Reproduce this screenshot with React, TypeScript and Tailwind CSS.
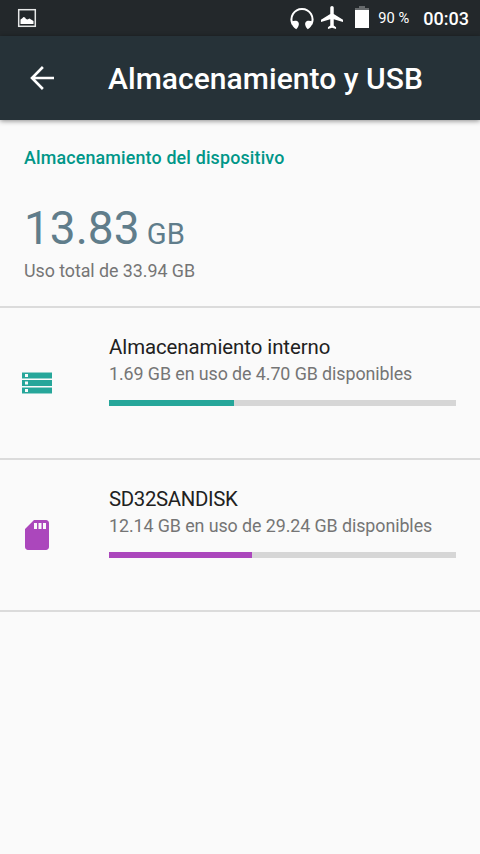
import React from "react";

interface Volume {
  name: string;
  nameClass: string;
  summary: string;
  percent: number;
  barClass: string;
  icon: React.ReactNode;
}

const StorageIcon = () => (
  <svg width="30" height="22" viewBox="0 0 30 22" shapeRendering="crispEdges">
    <path fill="#93d2cc" d="M0 0h30v7H0zM0 15h30v7H0z" />
    <path fill="#26a69a" d="M0 1h30v5H0zM0 8h30v6H0zM0 16h30v5H0z" />
    <path fill="#fafafa" d="M3 2h3v3H3zM3 10h3v2H3zM3 17h3v3H3z" />
    <path fill="#93d2cc" d="M3 9h3v1H3zM3 12h3v1H3z" />
  </svg>
);

const SdCardIcon = () => (
  <svg width="36" height="36" viewBox="0 0 24 24" fill="#ab47bc">
    <path d="M18 2h-8L4 8v12c0 1.1.9 2 2 2h12c1.1 0 2-.9 2-2V4c0-1.1-.9-2-2-2zm-6 6h-2V4h2v4zm3 0h-2V4h2v4zm3 0h-2V4h2v4z" />
  </svg>
);

const volumes: Volume[] = [
  {
    name: "Almacenamiento interno",
    nameClass: "tracking-[-0.06px]",
    summary: "1.69 GB en uso de 4.70 GB disponibles",
    percent: 36,
    barClass: "bg-[#26a69a]",
    icon: <StorageIcon />,
  },
  {
    name: "SD32SANDISK",
    nameClass: "tracking-[-0.33px]",
    summary: "12.14 GB en uso de 29.24 GB disponibles",
    percent: 41.2,
    barClass: "bg-[#ab47bc]",
    icon: <SdCardIcon />,
  },
];

const StatusBar = () => (
  <div className="flex h-9 items-center bg-[#23282b] pr-3 pl-[17px] text-white">
    <svg width="20" height="20" viewBox="0 0 20 20">
      <rect x="1.7" y="1.7" width="16.6" height="16.6" fill="none" stroke="#e6e8e8" strokeWidth="1.5" />
      <path fill="#fff" d="M3.5 16v-4.5L5 10.5l1.5-1.5 1.5.5 1 1.5 1.5.6 2-1 1.5 1 2.5 1.4v3z" />
    </svg>
    <div className="ml-auto flex items-center">
      {/* Headset */}
      <svg width="24" height="24" viewBox="0 0 24 24">
        <path
          fill="none"
          stroke="#fff"
          strokeWidth="2"
          d="M2.8 18.5A10.5 10.5 0 1 1 21.2 18.5"
        />
        <path
          fill="#fff"
          d="M1.3 15.5C3 14.8 5.5 14.3 7 15c1.7.8 2.1 2.3 1.8 3.8-.3 1.7-1.3 3.2-2.6 4.4C3.2 21.5 1.6 19 1.3 15.5zM22.7 15.5C21 14.800 18.500 14.300 17 15c-1.700.8-2.100 2.300-1.800 3.800.3 1.700 1.300 3.200 2.600 4.400 3-1.700 4.600-4.200 4.900-7.700z"
        />
      </svg>
      <svg
        className="-mt-[2px] ml-[7px]"
        width="22"
        height="23"
        viewBox="2 2 19 20"
        preserveAspectRatio="none"
        fill="#fff"
      >
        <path d="M21 16v-2l-8-5V3.5c0-.83-.67-1.5-1.5-1.5S10 2.67 10 3.5V9l-8 5v2l8-2.5V19l-2 1.5V22l3.5-1 3.5 1v-1.5L13 19v-5.5l8 2.5z" />
      </svg>
      <svg className="-mt-[2px] ml-3" width="14" height="22" viewBox="0 0 14 22">
        <path fill="#666a6c" d="M4 0h6v2h4v2H0V2h4z" />
        <path fill="#fff" d="M0 4h14v18H0z" />
      </svg>
      <span className="ml-[9px] w-[45px] text-[14.7px] leading-none">90 %</span>
      <span className="mt-0.5 -mr-px text-[18px] leading-none font-medium">00:03</span>
    </div>
  </div>
);

const Toolbar = () => (
  <div className="relative flex h-[84px] items-center bg-[#263238] pl-[30px] text-white shadow-[0_1px_5px_rgba(0,0,0,0.45)]">
    <svg width="24" height="24" viewBox="0 0 24 24" fill="none" stroke="#fff" strokeWidth="2.6">
      <path d="M12.9 1 2 12l10.9 11M1.5 12H24" />
    </svg>
    <h1 className="mt-0.5 ml-[54px] text-[30px] leading-9 font-medium tracking-[0.05px]">
      Almacenamiento y USB
    </h1>
  </div>
);

const VolumeRow = ({ volume }: { volume: Volume }) => (
  <div className="flex h-[152px] border-b-2 border-[#dbdbdb]">
    <div className="flex h-[150px] w-[74px] items-center justify-center">{volume.icon}</div>
    <div className="mr-6 ml-[35px] flex-1 pt-[27px]">
      <h2 className={`text-[20.4px] leading-6 text-[#212121] ${volume.nameClass}`}>{volume.name}</h2>
      <p className="mt-1 text-[17.85px] leading-[21px] tracking-[-0.08px] text-[#757575]">
        {volume.summary}
      </p>
      <div className="mt-4 h-1.5 bg-[#d6d6d6]">
        <div className={`h-full ${volume.barClass}`} style={{ width: `${volume.percent}%` }} />
      </div>
    </div>
  </div>
);

export default function App() {
  return (
    <div className="h-[854px] w-[480px] overflow-hidden bg-[#fafafa] font-[Roboto,sans-serif]">
      <StatusBar />
      <Toolbar />
      <div className="h-[188px] border-b-2 border-[#dbdbdb] px-6 pt-[27px]">
        <h2 className="text-[17.85px] leading-[21px] font-medium tracking-[0.17px] text-[#009688]">
          Almacenamiento del dispositivo
        </h2>
        <p className="mt-[33px] text-[46px] leading-[54px] text-[#607d8b]">
          13.83<span className="text-[29.2px]"> GB</span>
        </p>
        <p className="mt-[-1px] text-[17.85px] leading-[21px] tracking-[-0.05px] text-[#757575]">
          Uso total de 33.94 GB
        </p>
      </div>
      {volumes.map((volume) => (
        <VolumeRow key={volume.name} volume={volume} />
      ))}
    </div>
  );
}
